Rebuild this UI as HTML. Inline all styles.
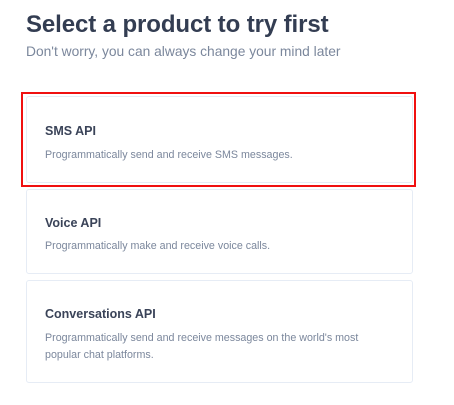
<!DOCTYPE html>
<html><head><style>
body{margin:0;width:454px;height:405px;background:#fff;font-family:"Liberation Sans",sans-serif;position:relative;overflow:hidden}
.t{position:absolute;left:26px;top:11px;font-size:24px;font-weight:bold;color:#333d52;letter-spacing:-0.1px;white-space:nowrap}
.s{position:absolute;left:26px;top:44px;font-size:13.8px;color:#7b879c;white-space:nowrap}
.red{position:absolute;left:21px;top:92px;width:391px;height:91px;border:2px solid #f01010}
.card{position:absolute;left:26px;width:385px;border:1px solid #e6ecf5;border-radius:3px;background:#fff}
.h{position:absolute;left:18px;font-size:12.5px;font-weight:bold;color:#3a4358;white-space:nowrap}
.d{position:absolute;left:18px;font-size:10.7px;color:#7b879c;line-height:17px}
</style></head><body>
<div class="t">Select a product to try first</div>
<div class="s">Don't worry, you can always change your mind later</div>
<div class="red"></div>
<div class="card" style="top:96px;height:85px"><div class="h" style="top:27px">SMS API</div><div class="d" style="top:50px">Programmatically send and receive SMS messages.</div></div>
<div class="card" style="top:189px;height:83px"><div class="h" style="top:26px">Voice API</div><div class="d" style="top:48px">Programmatically make and receive voice calls.</div></div>
<div class="card" style="top:280px;height:101px"><div class="h" style="top:26px">Conversations API</div><div class="d" style="top:49px;width:340px">Programmatically send and receive messages on the world's most popular chat platforms.</div></div>
</body></html>
